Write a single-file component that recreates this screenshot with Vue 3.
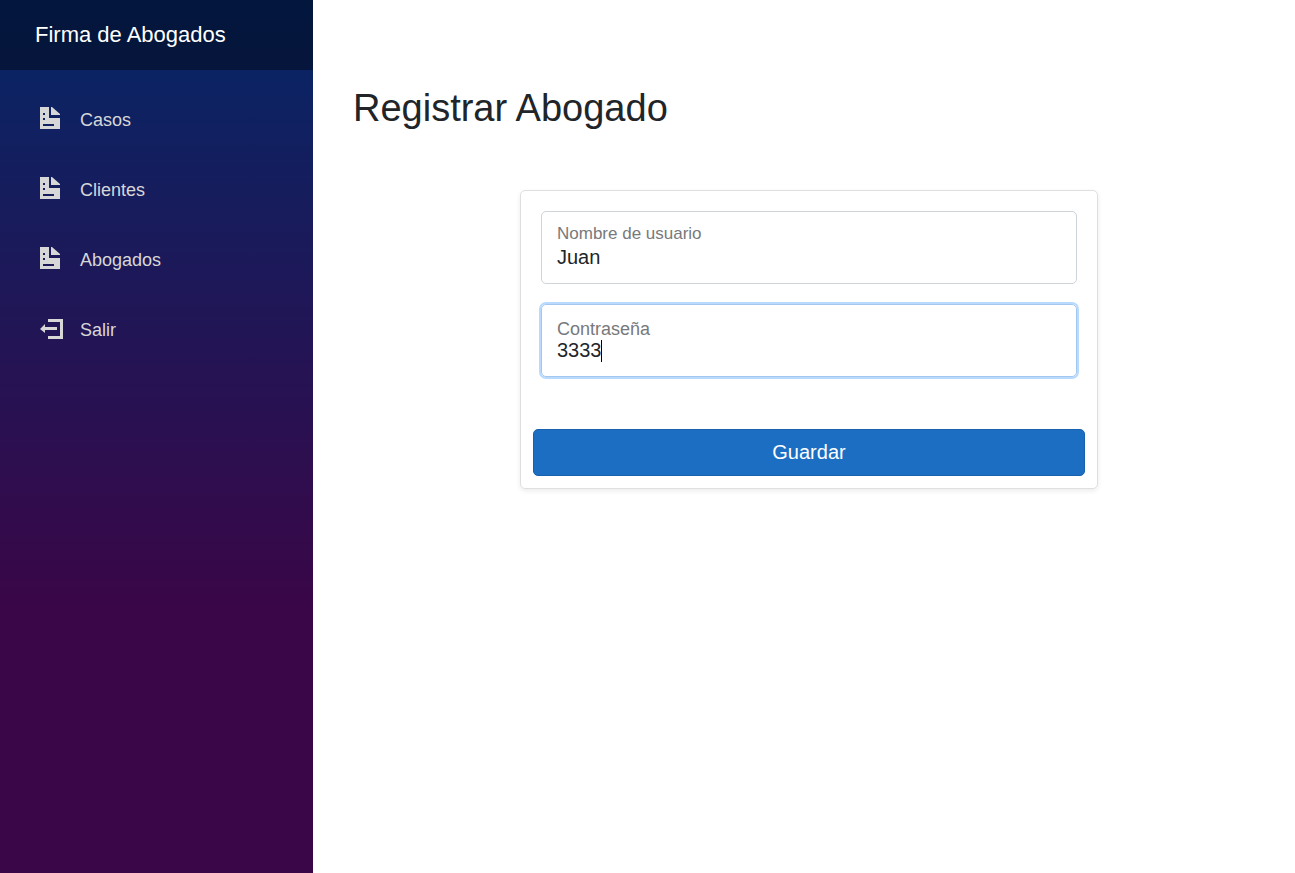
<script setup>
import { ref, onMounted } from 'vue'

const docPath = 'M0 0v22h20V11H9V0zM11 0v8h9V7l-8-7zM3 6h2v2H3zM3 11h2v2H3zM3 17h11v2H3z'
const exitPath = 'M8 2v3h12v14H8v3h15V2zM5 7L0 12l5 4v-3h12v-3H5z'

const links = [
  { label: 'Casos', icon: docPath },
  { label: 'Clientes', icon: docPath },
  { label: 'Abogados', icon: docPath },
  { label: 'Salir', icon: exitPath },
]

const username = ref('Juan')
const password = ref('3333')
const passwordInput = ref(null)

onMounted(() => {
  const el = passwordInput.value
  el.focus()
  el.setSelectionRange(el.value.length, el.value.length)
})
</script>

<template>
  <div class="page">
    <aside class="sidebar">
      <div class="brand"><a href="#">Firma de Abogados</a></div>
      <nav class="nav">
        <a v-for="link in links" :key="link.label" href="#" class="nav-link">
          <svg class="icon" viewBox="0 0 23 26" aria-hidden="true">
            <path :d="link.icon" fill="currentColor" fill-rule="evenodd" />
          </svg>
          <span>{{ link.label }}</span>
        </a>
      </nav>
    </aside>

    <main class="content">
      <h1>Registrar Abogado</h1>
      <form class="card" @submit.prevent>
        <div class="fields">
          <div class="field">
            <label for="username">Nombre de usuario</label>
            <input id="username" v-model="username" type="text" autocomplete="off" />
          </div>
          <div class="field">
            <label for="password" class="large">Contraseña</label>
            <div class="entry">
              <input id="password" ref="passwordInput" v-model="password" type="text" autocomplete="off" />
              <span class="caret" :style="{ left: password.length + 'ch' }"></span>
            </div>
          </div>
        </div>
        <button type="submit" class="save">Guardar</button>
      </form>
    </main>
  </div>
</template>

<style>
body {
  margin: 0;
  background: #fff;
}
</style>

<style scoped>
.page {
  display: flex;
  min-height: 100vh;
  font-family: "Liberation Sans", Arial, sans-serif;
  font-size: 20px;
  color: #212529;
}

.sidebar {
  flex: 0 0 313px;
  background: linear-gradient(180deg, rgb(5, 39, 103) 0%, #3a0647 70%);
}

.brand {
  display: flex;
  align-items: center;
  height: 70px;
  padding-left: 35px;
  background: rgba(0, 0, 0, 0.4);
}

.brand a {
  color: #fff;
  font-size: 22px;
  line-height: 28px;
  text-decoration: none;
}

.nav {
  display: flex;
  flex-direction: column;
  gap: 10px;
  padding: 20px;
}

.nav-link {
  display: flex;
  align-items: center;
  height: 60px;
  padding: 0 20px;
  border-radius: 4px;
  color: #d7d7d7;
  font-size: 18px;
  text-decoration: none;
}

.icon {
  flex: none;
  width: 23px;
  height: 26px;
  margin-right: 17px;
}

.content {
  flex: 1;
  min-width: 0;
  padding: 84px 30px 40px 40px;
}

h1 {
  margin: 0;
  font-size: 38px;
  font-weight: 400;
  line-height: 48px;
}

.card {
  box-sizing: border-box;
  width: 100%;
  max-width: 578px;
  margin: 58px auto 0;
  padding: 20px 12px 12px;
  border: 1px solid #dfdfdf;
  border-radius: 5px;
  box-shadow: 0 2px 5px rgba(0, 0, 0, 0.08);
}

.fields {
  display: flex;
  flex-direction: column;
  gap: 20px;
  padding: 0 8px;
}

.field {
  box-sizing: border-box;
  display: flex;
  flex-direction: column;
  height: 73px;
  padding: 11px 15px;
  border: 1px solid #ced4da;
  border-radius: 5px;
}

.field:focus-within {
  padding-top: 14px;
  border-color: #a3c8f0;
  box-shadow: 0 0 0 2px #b9d9fd;
}

.field label {
  color: #77797c;
  font-size: 17px;
  line-height: 21px;
}

.field label.large {
  font-size: 18px;
}

.field input {
  display: block;
  width: 100%;
  height: 26px;
  padding: 0;
  border: 0;
  outline: 0;
  background: transparent;
  color: #212529;
  caret-color: transparent;
  font: inherit;
}

.field:focus-within input {
  height: 21px;
}

.entry {
  position: relative;
}

.caret {
  position: absolute;
  top: 0;
  width: 1px;
  height: 22px;
  background: #000;
  visibility: hidden;
}

.entry:focus-within .caret {
  visibility: visible;
}

.save {
  display: block;
  width: 100%;
  height: 47px;
  margin-top: 52px;
  border: 1px solid #1861ac;
  border-radius: 5px;
  background: #1b6ec2;
  color: #fff;
  font: inherit;
  cursor: pointer;
}
</style>
